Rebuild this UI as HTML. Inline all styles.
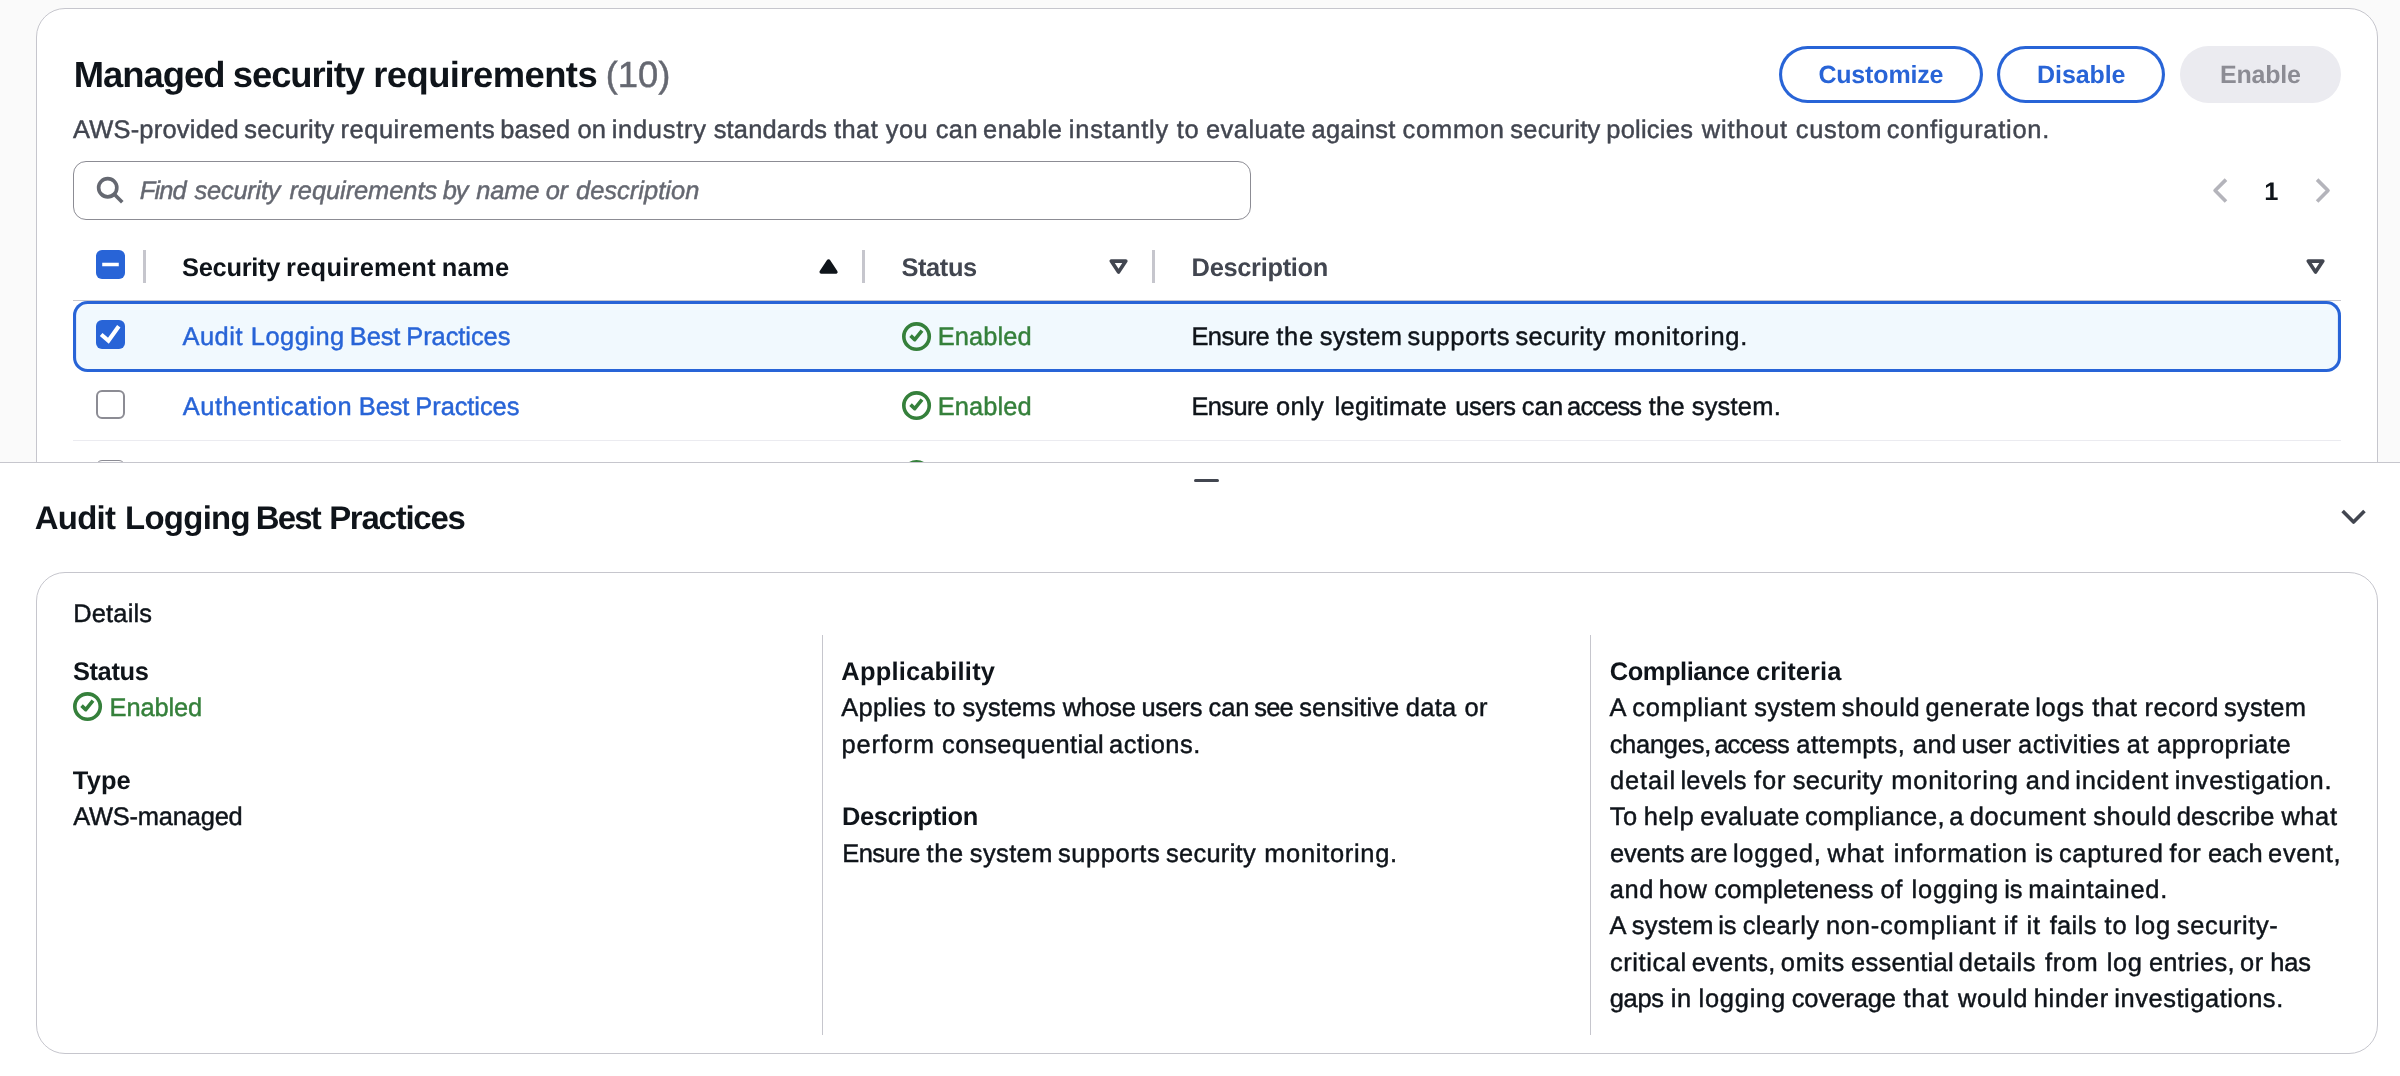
<!DOCTYPE html>
<html lang="en"><head><meta charset="utf-8"><title>Managed security requirements</title>
<style>
html,body{margin:0;padding:0}
body{width:2400px;height:1076px;overflow:hidden;position:relative;background:#fafafa;font-family:"Liberation Sans",Arial,sans-serif;color:#0f141a}
main,section,header,nav,div,dl,button,svg.ic,.t{position:absolute;box-sizing:border-box;margin:0;padding:0}
main{left:0;top:0;width:2400px;height:1076px}
.t{will-change:opacity;text-rendering:geometricPrecision;white-space:nowrap;font-weight:400;text-decoration:none;display:block}
.top{left:0;top:0;width:2400px;height:462px;overflow:hidden;background:#fafafa}
.card{background:#fff;border:1px solid #c6c6cd;border-radius:29px}
.tcard{left:36px;top:8px;width:2342px;height:600px}
.btn{appearance:none;-webkit-appearance:none;border:0;font:inherit;text-align:left;top:37px;height:57px;border-radius:40px;background:#fff;box-shadow:inset 0 0 0 3.1px #2864d7}
.btn.dis{background:#ebebf0;box-shadow:none}
.search{left:36px;top:152px;width:1178px;height:59px;border:1.5px solid #8c8c94;border-radius:13px;background:#fff}
.pager{left:2163px;top:152px;width:141px;height:59px}
.thead,.row,.selrow{left:36px;width:2268px}
.thead{top:223px;height:69px}
.vdiv{width:3px;background:#c6c6cd;top:18px;height:33px}
.hline{height:1px;left:0;top:68px;width:2268px}
.selrow{top:292px;height:71px;border-radius:14.5px;background:#f1f9fe;box-shadow:inset 0 0 0 3.1px #2864d7}
.row{height:69px}
.cb{left:23px;width:29px;height:29px;border-radius:6px}
.cb.on{background:#2864d7}
.cb.off{background:#fff;border:2px solid #8c8c94}
.cb svg{position:absolute;left:0;top:0;width:29px;height:29px}
.panel{left:0;top:462px;width:2400px;height:614px;background:#fff}
.panel .edge{left:0;top:0;width:2400px;height:1px;background:#c6c6cd}
.handle{left:1194px;top:17px;width:25.4px;height:3px;border-radius:1.5px;background:#424650}
.dcard{left:36px;top:110px;width:2342px;height:481.5px}
.col{top:62px;height:399.5px}
.coldiv{left:0;top:0;width:1px;height:399.5px;background:#c6c6cd}
svg.ic{width:29.09px;height:29.09px;fill:none;stroke:currentColor;stroke-width:2;stroke-linejoin:round;overflow:visible}
svg.ic .f{fill:currentColor}

</style></head><body>
<main>
<section class="top" aria-label="Managed security requirements">
  <div class="card tcard">
    <header>
<h2 class="t" style="left:0;top:0"><span class="t" style="left:36.69px;top:41.00px;font-size:36.40px;line-height:49px;letter-spacing:-0.973px;color:#0f141a;font-weight:700;">Managed</span> <span class="t" style="left:195.79px;top:41.00px;font-size:36.40px;line-height:49px;letter-spacing:-1.059px;color:#0f141a;font-weight:700;">security</span> <span class="t" style="left:336.17px;top:41.00px;font-size:36.40px;line-height:49px;letter-spacing:-0.549px;color:#0f141a;font-weight:700;">requirements</span></h2>
<span class="t" style="left:568.71px;top:41.00px;font-size:36.40px;line-height:49px;letter-spacing:-0.020px;color:#656871;-webkit-text-stroke:0.45px currentColor;">(10)</span>
<p class="t" style="left:0;top:0"><span class="t" style="left:35.91px;top:103.00px;font-size:25.45px;line-height:36px;letter-spacing:0.247px;color:#424650;-webkit-text-stroke:0.45px currentColor;">AWS-provided</span> <span class="t" style="left:207.25px;top:103.00px;font-size:25.45px;line-height:36px;letter-spacing:0.327px;color:#424650;-webkit-text-stroke:0.45px currentColor;">security</span> <span class="t" style="left:303.62px;top:103.00px;font-size:25.45px;line-height:36px;letter-spacing:0.507px;color:#424650;-webkit-text-stroke:0.45px currentColor;">requirements</span> <span class="t" style="left:463.27px;top:103.00px;font-size:25.45px;line-height:36px;letter-spacing:0.155px;color:#424650;-webkit-text-stroke:0.45px currentColor;">based on</span> <span class="t" style="left:574.66px;top:103.00px;font-size:25.45px;line-height:36px;letter-spacing:0.749px;color:#424650;-webkit-text-stroke:0.45px currentColor;">industry</span> <span class="t" style="left:676.69px;top:103.00px;font-size:25.45px;line-height:36px;letter-spacing:0.192px;color:#424650;-webkit-text-stroke:0.45px currentColor;">standards</span> <span class="t" style="left:796.97px;top:103.00px;font-size:25.45px;line-height:36px;letter-spacing:0.457px;color:#424650;-webkit-text-stroke:0.45px currentColor;">that you can</span> <span class="t" style="left:946.00px;top:103.00px;font-size:25.45px;line-height:36px;letter-spacing:0.518px;color:#424650;-webkit-text-stroke:0.45px currentColor;">enable</span> <span class="t" style="left:1031.85px;top:103.00px;font-size:25.45px;line-height:36px;letter-spacing:0.749px;color:#424650;-webkit-text-stroke:0.45px currentColor;">instantly to</span> <span class="t" style="left:1169.00px;top:103.00px;font-size:25.45px;line-height:36px;letter-spacing:0.461px;color:#424650;-webkit-text-stroke:0.45px currentColor;">evaluate</span> <span class="t" style="left:1274.56px;top:103.00px;font-size:25.45px;line-height:36px;letter-spacing:0.304px;color:#424650;-webkit-text-stroke:0.45px currentColor;">against</span> <span class="t" style="left:1365.60px;top:103.00px;font-size:25.45px;line-height:36px;letter-spacing:0.749px;color:#424650;-webkit-text-stroke:0.45px currentColor;">common</span> <span class="t" style="left:1473.25px;top:103.00px;font-size:25.45px;line-height:36px;letter-spacing:0.339px;color:#424650;-webkit-text-stroke:0.45px currentColor;">security</span> <span class="t" style="left:1569.25px;top:103.00px;font-size:25.45px;line-height:36px;letter-spacing:0.253px;color:#424650;-webkit-text-stroke:0.45px currentColor;">policies</span> <span class="t" style="left:1664.87px;top:103.00px;font-size:25.45px;line-height:36px;letter-spacing:0.749px;color:#424650;-webkit-text-stroke:0.45px currentColor;">without</span> <span class="t" style="left:1758.69px;top:103.00px;font-size:25.45px;line-height:36px;letter-spacing:0.745px;color:#424650;-webkit-text-stroke:0.45px currentColor;">custom</span> <span class="t" style="left:1849.87px;top:103.00px;font-size:25.45px;line-height:36px;letter-spacing:0.749px;color:#424650;-webkit-text-stroke:0.45px currentColor;">configuration.</span></p>
      <button class="btn" type="button" style="left:1742px;width:204px"><span class="t" style="left:39.38px;top:11.00px;font-size:25.00px;line-height:36px;letter-spacing:-0.164px;color:#2864d7;font-weight:700;">Customize</span></button>
      <button class="btn" type="button" style="left:1960px;width:168px"><span class="t" style="left:40.04px;top:11.00px;font-size:25.00px;line-height:36px;letter-spacing:-0.078px;color:#2864d7;font-weight:700;">Disable</span></button>
      <button class="btn dis" type="button" disabled style="left:2143px;width:161px"><span class="t" style="left:40.04px;top:11.00px;font-size:25.00px;line-height:36px;letter-spacing:-0.206px;color:#8c8c94;font-weight:700;">Enable</span></button>
    </header>
    <div class="search" role="search">
      <svg class="ic" viewBox="0 0 16 16" style="left:21.2px;top:13px;color:#656871"><circle cx="7" cy="7" r="5"/><path d="m15 15-4.5-4.5"/></svg>
<span class="t" style="left:0;top:0"><span class="t" style="left:65.84px;top:11.00px;font-size:25.45px;line-height:36px;letter-spacing:-0.923px;color:#656871;-webkit-text-stroke:0.45px currentColor;font-style:italic;">Find</span> <span class="t" style="left:120.60px;top:11.00px;font-size:25.45px;line-height:36px;letter-spacing:-0.256px;color:#656871;-webkit-text-stroke:0.45px currentColor;font-style:italic;">security</span> <span class="t" style="left:215.44px;top:11.00px;font-size:25.45px;line-height:36px;letter-spacing:-0.071px;color:#656871;-webkit-text-stroke:0.45px currentColor;font-style:italic;">requirements</span> <span class="t" style="left:368.65px;top:11.00px;font-size:25.45px;line-height:36px;letter-spacing:-0.923px;color:#656871;-webkit-text-stroke:0.45px currentColor;font-style:italic;">by</span> <span class="t" style="left:402.16px;top:11.00px;font-size:25.45px;line-height:36px;letter-spacing:-0.141px;color:#656871;-webkit-text-stroke:0.45px currentColor;font-style:italic;">name</span> <span class="t" style="left:471.82px;top:11.00px;font-size:25.45px;line-height:36px;letter-spacing:-0.504px;color:#656871;-webkit-text-stroke:0.45px currentColor;font-style:italic;">or</span> <span class="t" style="left:501.98px;top:11.00px;font-size:25.45px;line-height:36px;letter-spacing:0.040px;color:#656871;-webkit-text-stroke:0.45px currentColor;font-style:italic;">description</span></span>
    </div>
    <nav class="pager" aria-label="Pagination">
      <svg class="ic" viewBox="0 0 16 16" style="left:5.7px;top:14.7px;color:#b4b4bb"><path d="M11 2 5 8l6 6"/></svg>
<span class="t" style="left:64.25px;top:13.00px;font-size:25.45px;line-height:36px;letter-spacing:0.000px;color:#0f141a;font-weight:700;">1</span>
      <svg class="ic" viewBox="0 0 16 16" style="left:108.4px;top:14.7px;color:#b4b4bb"><path d="m5 2 6 6-6 6"/></svg>
    </nav>
    <div class="thead" role="row">
      <div class="cb on" role="checkbox" aria-checked="mixed" style="top:18px"><svg viewBox="0 0 14 14" fill="none" stroke="#fff" stroke-width="1.7"><path d="M3 7h8"/></svg></div>
      <div class="vdiv" style="left:70px"></div>
<span class="t" style="left:0;top:0"><span class="t" style="left:109.06px;top:18.00px;font-size:25.45px;line-height:36px;letter-spacing:-0.293px;color:#0f141a;font-weight:700;">Security</span> <span class="t" style="left:213.05px;top:18.00px;font-size:25.45px;line-height:36px;letter-spacing:0.254px;color:#0f141a;font-weight:700;">requirement</span> <span class="t" style="left:368.74px;top:18.00px;font-size:25.45px;line-height:36px;letter-spacing:0.280px;color:#0f141a;font-weight:700;">name</span></span>
<span class="t" style="left:828.56px;top:18.00px;font-size:25.45px;line-height:36px;letter-spacing:-0.431px;color:#424650;font-weight:700;">Status</span>
<span class="t" style="left:1118.59px;top:18.00px;font-size:25.45px;line-height:36px;letter-spacing:-0.323px;color:#424650;font-weight:700;">Description</span>
      <svg class="ic" viewBox="0 0 16 16" style="left:740.8px;top:20.2px;color:#0f141a"><path class="f" d="m8 5 4 6H4l4-6Z"/></svg>
      <div class="vdiv" style="left:788.5px"></div>
      <svg class="ic" viewBox="0 0 16 16" style="left:1031px;top:20.2px;color:#424650"><path d="M4 5h8l-4 6-4-6Z"/></svg>
      <div class="vdiv" style="left:1078.5px"></div>
      <svg class="ic" viewBox="0 0 16 16" style="left:2228px;top:20.2px;color:#424650"><path d="M4 5h8l-4 6-4-6Z"/></svg>
      <div class="hline" style="background:#c6c6cd"></div>
    </div>
    <div class="selrow" role="row" aria-selected="true">
      <div class="cb on" role="checkbox" aria-checked="true" style="top:19px"><svg viewBox="0 0 14 14" fill="none" stroke="#fff" stroke-width="2"><path d="M2.5 7 6 10l5-7"/></svg></div>
      <svg class="ic" viewBox="0 0 16 16" style="left:828.9px;top:20.7px;color:#35803b"><circle cx="8" cy="8" r="7"/><path d="M4.7 7.5 7 9.7l4-4.9"/></svg>
<a class="t" style="left:0;top:0"><span class="t" style="left:109.53px;top:18.00px;font-size:25.45px;line-height:36px;letter-spacing:0.487px;color:#2864d7;-webkit-text-stroke:0.45px currentColor;">Audit</span> <span class="t" style="left:177.81px;top:18.00px;font-size:25.45px;line-height:36px;letter-spacing:0.487px;color:#2864d7;-webkit-text-stroke:0.45px currentColor;">Logging</span> <span class="t" style="left:276.86px;top:18.00px;font-size:25.45px;line-height:36px;letter-spacing:-0.119px;color:#2864d7;-webkit-text-stroke:0.45px currentColor;">Best</span> <span class="t" style="left:333.30px;top:18.00px;font-size:25.45px;line-height:36px;letter-spacing:-0.060px;color:#2864d7;-webkit-text-stroke:0.45px currentColor;">Practices</span></a>
<span class="t" style="left:864.80px;top:18.00px;font-size:25.45px;line-height:36px;letter-spacing:0.092px;color:#35803b;-webkit-text-stroke:0.45px currentColor;">Enabled</span>
<span class="t" style="left:0;top:0"><span class="t" style="left:1118.38px;top:18.00px;font-size:25.45px;line-height:36px;letter-spacing:-0.471px;color:#0f141a;-webkit-text-stroke:0.45px currentColor;">Ensure</span> <span class="t" style="left:1203.28px;top:18.00px;font-size:25.45px;line-height:36px;letter-spacing:0.729px;color:#0f141a;-webkit-text-stroke:0.45px currentColor;">the</span> <span class="t" style="left:1246.69px;top:18.00px;font-size:25.45px;line-height:36px;letter-spacing:0.351px;color:#0f141a;-webkit-text-stroke:0.45px currentColor;">system</span> <span class="t" style="left:1334.52px;top:18.00px;font-size:25.45px;line-height:36px;letter-spacing:0.615px;color:#0f141a;-webkit-text-stroke:0.45px currentColor;">supports</span> <span class="t" style="left:1442.52px;top:18.00px;font-size:25.45px;line-height:36px;letter-spacing:0.316px;color:#0f141a;-webkit-text-stroke:0.45px currentColor;">security</span> <span class="t" style="left:1541.10px;top:18.00px;font-size:25.45px;line-height:36px;letter-spacing:0.729px;color:#0f141a;-webkit-text-stroke:0.45px currentColor;">monitoring.</span></span>
    </div>
    <div class="row" role="row" style="top:363px">
      <div class="cb off" role="checkbox" aria-checked="false" style="top:18px"></div>
      <svg class="ic" viewBox="0 0 16 16" style="left:828.9px;top:18.7px;color:#35803b"><circle cx="8" cy="8" r="7"/><path d="M4.7 7.5 7 9.7l4-4.9"/></svg>
<a class="t" style="left:0;top:0"><span class="t" style="left:109.78px;top:17.00px;font-size:25.45px;line-height:36px;letter-spacing:0.593px;color:#2864d7;-webkit-text-stroke:0.45px currentColor;">Authentication</span> <span class="t" style="left:285.86px;top:17.00px;font-size:25.45px;line-height:36px;letter-spacing:-0.110px;color:#2864d7;-webkit-text-stroke:0.45px currentColor;">Best</span> <span class="t" style="left:342.34px;top:17.00px;font-size:25.45px;line-height:36px;letter-spacing:-0.065px;color:#2864d7;-webkit-text-stroke:0.45px currentColor;">Practices</span></a>
<span class="t" style="left:864.80px;top:17.00px;font-size:25.45px;line-height:36px;letter-spacing:0.092px;color:#35803b;-webkit-text-stroke:0.45px currentColor;">Enabled</span>
<span class="t" style="left:0;top:0"><span class="t" style="left:1118.39px;top:17.00px;font-size:25.45px;line-height:36px;letter-spacing:-0.599px;color:#0f141a;-webkit-text-stroke:0.45px currentColor;">Ensure</span> <span class="t" style="left:1203.00px;top:17.00px;font-size:25.45px;line-height:36px;letter-spacing:0.361px;color:#0f141a;-webkit-text-stroke:0.45px currentColor;">only</span> <span class="t" style="left:1261.41px;top:17.00px;font-size:25.45px;line-height:36px;letter-spacing:0.361px;color:#0f141a;-webkit-text-stroke:0.45px currentColor;">legitimate</span> <span class="t" style="left:1382.28px;top:17.00px;font-size:25.45px;line-height:36px;letter-spacing:-0.370px;color:#0f141a;-webkit-text-stroke:0.45px currentColor;">users</span> <span class="t" style="left:1448.69px;top:17.00px;font-size:25.45px;line-height:36px;letter-spacing:0.168px;color:#0f141a;-webkit-text-stroke:0.45px currentColor;">can</span> <span class="t" style="left:1494.10px;top:17.00px;font-size:25.45px;line-height:36px;letter-spacing:-0.839px;color:#0f141a;-webkit-text-stroke:0.45px currentColor;">access</span> <span class="t" style="left:1575.69px;top:17.00px;font-size:25.45px;line-height:36px;letter-spacing:0.361px;color:#0f141a;-webkit-text-stroke:0.45px currentColor;">the</span> <span class="t" style="left:1618.69px;top:17.00px;font-size:25.45px;line-height:36px;letter-spacing:0.239px;color:#0f141a;-webkit-text-stroke:0.45px currentColor;">system.</span></span>
      <div class="hline" style="background:#ebebf0"></div>
    </div>
    <div class="row" role="row" style="top:432px">
      <div class="cb off" role="checkbox" aria-checked="false" style="top:19px;border-width:1px"></div>
      <svg class="ic" viewBox="0 0 16 16" style="left:829px;top:19px;color:#35803b"><circle cx="8" cy="8" r="7"/></svg>
    </div>
  </div>
</section>
<section class="panel" aria-label="Audit Logging Best Practices">
  <div class="edge"></div>
  <div class="handle" role="separator"></div>
<h3 class="t" style="left:0;top:0"><span class="t" style="left:34.69px;top:33.00px;font-size:32.90px;line-height:45px;letter-spacing:-0.680px;color:#0f141a;font-weight:700;">Audit</span> <span class="t" style="left:125.03px;top:33.00px;font-size:32.90px;line-height:45px;letter-spacing:-0.680px;color:#0f141a;font-weight:700;">Logging</span> <span class="t" style="left:255.87px;top:33.00px;font-size:32.90px;line-height:45px;letter-spacing:-1.841px;color:#0f141a;font-weight:700;">Best</span> <span class="t" style="left:329.15px;top:33.00px;font-size:32.90px;line-height:45px;letter-spacing:-1.206px;color:#0f141a;font-weight:700;">Practices</span></h3>
  <svg class="ic" viewBox="0 0 16 16" style="left:2338.8px;top:39.7px;color:#424650"><path d="m2 5 6 6 6-6"/></svg>
  <div class="card dcard">
<span class="t" style="left:36.16px;top:23.00px;font-size:25.45px;line-height:36px;letter-spacing:0.196px;color:#0f141a;-webkit-text-stroke:0.45px currentColor;">Details</span>
    <dl class="col" style="left:36px;width:749px">
      <svg class="ic" viewBox="0 0 16 16" style="left:0;top:57.2px;color:#35803b"><circle cx="8" cy="8" r="7"/><path d="M4.7 7.5 7 9.7l4-4.9"/></svg>
<dt class="t" style="left:-0.10px;top:19.00px;font-size:25.45px;line-height:36px;letter-spacing:-0.360px;color:#0f141a;font-weight:700;">Status</dt>
<dd class="t" style="left:36.53px;top:55.00px;font-size:25.45px;line-height:36px;letter-spacing:-0.103px;color:#35803b;-webkit-text-stroke:0.45px currentColor;">Enabled</dd>
<dt class="t" style="left:-0.17px;top:128.00px;font-size:25.45px;line-height:36px;letter-spacing:0.134px;color:#0f141a;font-weight:700;">Type</dt>
<dd class="t" style="left:0.16px;top:164.00px;font-size:25.45px;line-height:36px;letter-spacing:-0.193px;color:#0f141a;-webkit-text-stroke:0.45px currentColor;">AWS-managed</dd>
    </dl>
    <dl class="col" style="left:785px;width:768px">
      <div class="coldiv"></div>
<dt class="t" style="left:19.35px;top:19.00px;font-size:25.45px;line-height:36px;letter-spacing:0.197px;color:#0f141a;font-weight:700;">Applicability</dt>
<dd class="t" style="left:0;top:0"><span class="t" style="left:19.37px;top:55.00px;font-size:25.45px;line-height:36px;letter-spacing:0.215px;color:#0f141a;-webkit-text-stroke:0.45px currentColor;">Applies</span> <span class="t" style="left:111.85px;top:55.00px;font-size:25.45px;line-height:36px;letter-spacing:0.317px;color:#0f141a;-webkit-text-stroke:0.45px currentColor;">to</span> <span class="t" style="left:140.61px;top:55.00px;font-size:25.45px;line-height:36px;letter-spacing:-0.041px;color:#0f141a;-webkit-text-stroke:0.45px currentColor;">systems</span> <span class="t" style="left:240.83px;top:55.00px;font-size:25.45px;line-height:36px;letter-spacing:-0.091px;color:#0f141a;-webkit-text-stroke:0.45px currentColor;">whose</span> <span class="t" style="left:319.42px;top:55.00px;font-size:25.45px;line-height:36px;letter-spacing:-0.308px;color:#0f141a;-webkit-text-stroke:0.45px currentColor;">users</span> <span class="t" style="left:386.59px;top:55.00px;font-size:25.45px;line-height:36px;letter-spacing:-0.135px;color:#0f141a;-webkit-text-stroke:0.45px currentColor;">can</span> <span class="t" style="left:432.36px;top:55.00px;font-size:25.45px;line-height:36px;letter-spacing:-0.883px;color:#0f141a;-webkit-text-stroke:0.45px currentColor;">see</span> <span class="t" style="left:477.27px;top:55.00px;font-size:25.45px;line-height:36px;letter-spacing:0.128px;color:#0f141a;-webkit-text-stroke:0.45px currentColor;">sensitive</span> <span class="t" style="left:583.73px;top:55.00px;font-size:25.45px;line-height:36px;letter-spacing:0.317px;color:#0f141a;-webkit-text-stroke:0.45px currentColor;">data</span> <span class="t" style="left:642.58px;top:55.00px;font-size:25.45px;line-height:36px;letter-spacing:0.317px;color:#0f141a;-webkit-text-stroke:0.45px currentColor;">or</span></dd>
<dd class="t" style="left:0;top:0"><span class="t" style="left:19.62px;top:92.00px;font-size:25.45px;line-height:36px;letter-spacing:0.779px;color:#0f141a;-webkit-text-stroke:0.45px currentColor;">perform</span> <span class="t" style="left:120.04px;top:92.00px;font-size:25.45px;line-height:36px;letter-spacing:0.390px;color:#0f141a;-webkit-text-stroke:0.45px currentColor;">consequential</span> <span class="t" style="left:287.11px;top:92.00px;font-size:25.45px;line-height:36px;letter-spacing:0.489px;color:#0f141a;-webkit-text-stroke:0.45px currentColor;">actions.</span></dd>
<dt class="t" style="left:19.89px;top:164.00px;font-size:25.45px;line-height:36px;letter-spacing:-0.354px;color:#0f141a;font-weight:700;">Description</dt>
<dd class="t" style="left:0;top:0"><span class="t" style="left:20.17px;top:201.00px;font-size:25.45px;line-height:36px;letter-spacing:-0.495px;color:#0f141a;-webkit-text-stroke:0.45px currentColor;">Ensure</span> <span class="t" style="left:104.48px;top:201.00px;font-size:25.45px;line-height:36px;letter-spacing:0.705px;color:#0f141a;-webkit-text-stroke:0.45px currentColor;">the</span> <span class="t" style="left:147.81px;top:201.00px;font-size:25.45px;line-height:36px;letter-spacing:0.394px;color:#0f141a;-webkit-text-stroke:0.45px currentColor;">system</span> <span class="t" style="left:235.92px;top:201.00px;font-size:25.45px;line-height:36px;letter-spacing:0.595px;color:#0f141a;-webkit-text-stroke:0.45px currentColor;">supports</span> <span class="t" style="left:343.92px;top:201.00px;font-size:25.45px;line-height:36px;letter-spacing:0.305px;color:#0f141a;-webkit-text-stroke:0.45px currentColor;">security</span> <span class="t" style="left:442.20px;top:201.00px;font-size:25.45px;line-height:36px;letter-spacing:0.705px;color:#0f141a;-webkit-text-stroke:0.45px currentColor;">monitoring.</span></dd>
    </dl>
    <dl class="col" style="left:1553px;width:751px">
      <div class="coldiv"></div>
<dt class="t" style="left:0;top:0"><span class="t" style="left:19.76px;top:19.00px;font-size:25.45px;line-height:36px;letter-spacing:-0.443px;color:#0f141a;font-weight:700;">Compliance</span> <span class="t" style="left:165.93px;top:19.00px;font-size:25.45px;line-height:36px;letter-spacing:0.078px;color:#0f141a;font-weight:700;">criteria</span></dt>
<dd class="t" style="left:0;top:0"><span class="t" style="left:19.49px;top:55.00px;font-size:25.45px;line-height:36px;letter-spacing:0.000px;color:#0f141a;-webkit-text-stroke:0.45px currentColor;">A</span> <span class="t" style="left:42.34px;top:55.00px;font-size:25.45px;line-height:36px;letter-spacing:0.673px;color:#0f141a;-webkit-text-stroke:0.45px currentColor;">compliant</span> <span class="t" style="left:164.27px;top:55.00px;font-size:25.45px;line-height:36px;letter-spacing:0.316px;color:#0f141a;-webkit-text-stroke:0.45px currentColor;">system</span> <span class="t" style="left:251.81px;top:55.00px;font-size:25.45px;line-height:36px;letter-spacing:0.601px;color:#0f141a;-webkit-text-stroke:0.45px currentColor;">should</span> <span class="t" style="left:335.41px;top:55.00px;font-size:25.45px;line-height:36px;letter-spacing:0.571px;color:#0f141a;-webkit-text-stroke:0.45px currentColor;">generate</span> <span class="t" style="left:445.29px;top:55.00px;font-size:25.45px;line-height:36px;letter-spacing:0.673px;color:#0f141a;-webkit-text-stroke:0.45px currentColor;">logs</span> <span class="t" style="left:502.25px;top:55.00px;font-size:25.45px;line-height:36px;letter-spacing:0.673px;color:#0f141a;-webkit-text-stroke:0.45px currentColor;">that</span> <span class="t" style="left:554.62px;top:55.00px;font-size:25.45px;line-height:36px;letter-spacing:0.348px;color:#0f141a;-webkit-text-stroke:0.45px currentColor;">record</span> <span class="t" style="left:633.99px;top:55.00px;font-size:25.45px;line-height:36px;letter-spacing:0.289px;color:#0f141a;-webkit-text-stroke:0.45px currentColor;">system</span></dd>
<dd class="t" style="left:0;top:0"><span class="t" style="left:19.64px;top:92.00px;font-size:25.45px;line-height:36px;letter-spacing:-0.230px;color:#0f141a;-webkit-text-stroke:0.45px currentColor;">changes,</span> <span class="t" style="left:124.15px;top:92.00px;font-size:25.45px;line-height:36px;letter-spacing:-0.711px;color:#0f141a;-webkit-text-stroke:0.45px currentColor;">access</span> <span class="t" style="left:206.29px;top:92.00px;font-size:25.45px;line-height:36px;letter-spacing:0.489px;color:#0f141a;-webkit-text-stroke:0.45px currentColor;">attempts,</span> <span class="t" style="left:322.81px;top:92.00px;font-size:25.45px;line-height:36px;letter-spacing:0.489px;color:#0f141a;-webkit-text-stroke:0.45px currentColor;">and</span> <span class="t" style="left:371.55px;top:92.00px;font-size:25.45px;line-height:36px;letter-spacing:-0.049px;color:#0f141a;-webkit-text-stroke:0.45px currentColor;">user</span> <span class="t" style="left:428.03px;top:92.00px;font-size:25.45px;line-height:36px;letter-spacing:0.489px;color:#0f141a;-webkit-text-stroke:0.45px currentColor;">activities</span> <span class="t" style="left:536.80px;top:92.00px;font-size:25.45px;line-height:36px;letter-spacing:0.489px;color:#0f141a;-webkit-text-stroke:0.45px currentColor;">at</span> <span class="t" style="left:567.10px;top:92.00px;font-size:25.45px;line-height:36px;letter-spacing:0.489px;color:#0f141a;-webkit-text-stroke:0.45px currentColor;">appropriate</span></dd>
<dd class="t" style="left:0;top:0"><span class="t" style="left:20.03px;top:128.00px;font-size:25.45px;line-height:36px;letter-spacing:0.885px;color:#0f141a;-webkit-text-stroke:0.45px currentColor;">detail</span> <span class="t" style="left:90.51px;top:128.00px;font-size:25.45px;line-height:36px;letter-spacing:0.176px;color:#0f141a;-webkit-text-stroke:0.45px currentColor;">levels</span> <span class="t" style="left:163.96px;top:128.00px;font-size:25.45px;line-height:36px;letter-spacing:0.885px;color:#0f141a;-webkit-text-stroke:0.45px currentColor;">for</span> <span class="t" style="left:202.69px;top:128.00px;font-size:25.45px;line-height:36px;letter-spacing:0.296px;color:#0f141a;-webkit-text-stroke:0.45px currentColor;">security</span> <span class="t" style="left:301.15px;top:128.00px;font-size:25.45px;line-height:36px;letter-spacing:0.885px;color:#0f141a;-webkit-text-stroke:0.45px currentColor;">monitoring</span> <span class="t" style="left:435.82px;top:128.00px;font-size:25.45px;line-height:36px;letter-spacing:0.885px;color:#0f141a;-webkit-text-stroke:0.45px currentColor;">and</span> <span class="t" style="left:485.22px;top:128.00px;font-size:25.45px;line-height:36px;letter-spacing:0.788px;color:#0f141a;-webkit-text-stroke:0.45px currentColor;">incident</span> <span class="t" style="left:584.81px;top:128.00px;font-size:25.45px;line-height:36px;letter-spacing:0.629px;color:#0f141a;-webkit-text-stroke:0.45px currentColor;">investigation.</span></dd>
<dd class="t" style="left:0;top:0"><span class="t" style="left:19.79px;top:164.00px;font-size:25.45px;line-height:36px;letter-spacing:0.616px;color:#0f141a;-webkit-text-stroke:0.45px currentColor;">To</span> <span class="t" style="left:53.72px;top:164.00px;font-size:25.45px;line-height:36px;letter-spacing:0.616px;color:#0f141a;-webkit-text-stroke:0.45px currentColor;">help</span> <span class="t" style="left:110.33px;top:164.00px;font-size:25.45px;line-height:36px;letter-spacing:0.402px;color:#0f141a;-webkit-text-stroke:0.45px currentColor;">evaluate</span> <span class="t" style="left:215.04px;top:164.00px;font-size:25.45px;line-height:36px;letter-spacing:0.374px;color:#0f141a;-webkit-text-stroke:0.45px currentColor;">compliance,</span> <span class="t" style="left:359.33px;top:164.00px;font-size:25.45px;line-height:36px;letter-spacing:0.000px;color:#0f141a;-webkit-text-stroke:0.45px currentColor;">a</span> <span class="t" style="left:379.77px;top:164.00px;font-size:25.45px;line-height:36px;letter-spacing:0.616px;color:#0f141a;-webkit-text-stroke:0.45px currentColor;">document</span> <span class="t" style="left:503.29px;top:164.00px;font-size:25.45px;line-height:36px;letter-spacing:0.616px;color:#0f141a;-webkit-text-stroke:0.45px currentColor;">should</span> <span class="t" style="left:586.78px;top:164.00px;font-size:25.45px;line-height:36px;letter-spacing:0.198px;color:#0f141a;-webkit-text-stroke:0.45px currentColor;">describe</span> <span class="t" style="left:691.38px;top:164.00px;font-size:25.45px;line-height:36px;letter-spacing:0.616px;color:#0f141a;-webkit-text-stroke:0.45px currentColor;">what</span></dd>
<dd class="t" style="left:0;top:0"><span class="t" style="left:19.90px;top:201.00px;font-size:25.45px;line-height:36px;letter-spacing:-0.092px;color:#0f141a;-webkit-text-stroke:0.45px currentColor;">events</span> <span class="t" style="left:100.33px;top:201.00px;font-size:25.45px;line-height:36px;letter-spacing:0.185px;color:#0f141a;-webkit-text-stroke:0.45px currentColor;">are</span> <span class="t" style="left:142.93px;top:201.00px;font-size:25.45px;line-height:36px;letter-spacing:0.733px;color:#0f141a;-webkit-text-stroke:0.45px currentColor;">logged,</span> <span class="t" style="left:237.56px;top:201.00px;font-size:25.45px;line-height:36px;letter-spacing:0.733px;color:#0f141a;-webkit-text-stroke:0.45px currentColor;">what</span> <span class="t" style="left:303.78px;top:201.00px;font-size:25.45px;line-height:36px;letter-spacing:0.733px;color:#0f141a;-webkit-text-stroke:0.45px currentColor;">information</span> <span class="t" style="left:445.08px;top:201.00px;font-size:25.45px;line-height:36px;letter-spacing:-0.467px;color:#0f141a;-webkit-text-stroke:0.45px currentColor;">is</span> <span class="t" style="left:468.93px;top:201.00px;font-size:25.45px;line-height:36px;letter-spacing:0.702px;color:#0f141a;-webkit-text-stroke:0.45px currentColor;">captured</span> <span class="t" style="left:579.58px;top:201.00px;font-size:25.45px;line-height:36px;letter-spacing:0.733px;color:#0f141a;-webkit-text-stroke:0.45px currentColor;">for</span> <span class="t" style="left:618.09px;top:201.00px;font-size:25.45px;line-height:36px;letter-spacing:-0.172px;color:#0f141a;-webkit-text-stroke:0.45px currentColor;">each</span> <span class="t" style="left:678.09px;top:201.00px;font-size:25.45px;line-height:36px;letter-spacing:0.659px;color:#0f141a;-webkit-text-stroke:0.45px currentColor;">event,</span></dd>
<dd class="t" style="left:0;top:0"><span class="t" style="left:19.87px;top:237.00px;font-size:25.45px;line-height:36px;letter-spacing:0.576px;color:#0f141a;-webkit-text-stroke:0.45px currentColor;">and</span> <span class="t" style="left:68.67px;top:237.00px;font-size:25.45px;line-height:36px;letter-spacing:0.752px;color:#0f141a;-webkit-text-stroke:0.45px currentColor;">how</span> <span class="t" style="left:124.36px;top:237.00px;font-size:25.45px;line-height:36px;letter-spacing:0.189px;color:#0f141a;-webkit-text-stroke:0.45px currentColor;">completeness</span> <span class="t" style="left:290.43px;top:237.00px;font-size:25.45px;line-height:36px;letter-spacing:0.752px;color:#0f141a;-webkit-text-stroke:0.45px currentColor;">of</span> <span class="t" style="left:321.62px;top:237.00px;font-size:25.45px;line-height:36px;letter-spacing:0.752px;color:#0f141a;-webkit-text-stroke:0.45px currentColor;">logging</span> <span class="t" style="left:414.32px;top:237.00px;font-size:25.45px;line-height:36px;letter-spacing:-0.306px;color:#0f141a;-webkit-text-stroke:0.45px currentColor;">is</span> <span class="t" style="left:438.28px;top:237.00px;font-size:25.45px;line-height:36px;letter-spacing:0.752px;color:#0f141a;-webkit-text-stroke:0.45px currentColor;">maintained.</span></dd>
<dd class="t" style="left:0;top:0"><span class="t" style="left:19.49px;top:273.00px;font-size:25.45px;line-height:36px;letter-spacing:0.000px;color:#0f141a;-webkit-text-stroke:0.45px currentColor;">A</span> <span class="t" style="left:41.69px;top:273.00px;font-size:25.45px;line-height:36px;letter-spacing:0.260px;color:#0f141a;-webkit-text-stroke:0.45px currentColor;">system</span> <span class="t" style="left:128.32px;top:273.00px;font-size:25.45px;line-height:36px;letter-spacing:-0.265px;color:#0f141a;-webkit-text-stroke:0.45px currentColor;">is</span> <span class="t" style="left:152.67px;top:273.00px;font-size:25.45px;line-height:36px;letter-spacing:0.470px;color:#0f141a;-webkit-text-stroke:0.45px currentColor;">clearly</span> <span class="t" style="left:235.88px;top:273.00px;font-size:25.45px;line-height:36px;letter-spacing:0.818px;color:#0f141a;-webkit-text-stroke:0.45px currentColor;">non-compliant</span> <span class="t" style="left:413.63px;top:273.00px;font-size:25.45px;line-height:36px;letter-spacing:0.818px;color:#0f141a;-webkit-text-stroke:0.45px currentColor;">if</span> <span class="t" style="left:436.58px;top:273.00px;font-size:25.45px;line-height:36px;letter-spacing:0.818px;color:#0f141a;-webkit-text-stroke:0.45px currentColor;">it</span> <span class="t" style="left:459.64px;top:273.00px;font-size:25.45px;line-height:36px;letter-spacing:0.388px;color:#0f141a;-webkit-text-stroke:0.45px currentColor;">fails</span> <span class="t" style="left:514.58px;top:273.00px;font-size:25.45px;line-height:36px;letter-spacing:0.818px;color:#0f141a;-webkit-text-stroke:0.45px currentColor;">to</span> <span class="t" style="left:544.58px;top:273.00px;font-size:25.45px;line-height:36px;letter-spacing:0.818px;color:#0f141a;-webkit-text-stroke:0.45px currentColor;">log</span> <span class="t" style="left:586.81px;top:273.00px;font-size:25.45px;line-height:36px;letter-spacing:0.610px;color:#0f141a;-webkit-text-stroke:0.45px currentColor;">security-</span></dd>
<dd class="t" style="left:0;top:0"><span class="t" style="left:19.93px;top:310.00px;font-size:25.45px;line-height:36px;letter-spacing:0.592px;color:#0f141a;-webkit-text-stroke:0.45px currentColor;">critical</span> <span class="t" style="left:101.64px;top:310.00px;font-size:25.45px;line-height:36px;letter-spacing:0.299px;color:#0f141a;-webkit-text-stroke:0.45px currentColor;">events,</span> <span class="t" style="left:190.87px;top:310.00px;font-size:25.45px;line-height:36px;letter-spacing:0.658px;color:#0f141a;-webkit-text-stroke:0.45px currentColor;">omits</span> <span class="t" style="left:261.11px;top:310.00px;font-size:25.45px;line-height:36px;letter-spacing:0.255px;color:#0f141a;-webkit-text-stroke:0.45px currentColor;">essential</span> <span class="t" style="left:368.83px;top:310.00px;font-size:25.45px;line-height:36px;letter-spacing:0.510px;color:#0f141a;-webkit-text-stroke:0.45px currentColor;">details</span> <span class="t" style="left:454.94px;top:310.00px;font-size:25.45px;line-height:36px;letter-spacing:0.658px;color:#0f141a;-webkit-text-stroke:0.45px currentColor;">from</span> <span class="t" style="left:516.72px;top:310.00px;font-size:25.45px;line-height:36px;letter-spacing:0.658px;color:#0f141a;-webkit-text-stroke:0.45px currentColor;">log</span> <span class="t" style="left:558.90px;top:310.00px;font-size:25.45px;line-height:36px;letter-spacing:0.312px;color:#0f141a;-webkit-text-stroke:0.45px currentColor;">entries,</span> <span class="t" style="left:649.96px;top:310.00px;font-size:25.45px;line-height:36px;letter-spacing:0.658px;color:#0f141a;-webkit-text-stroke:0.45px currentColor;">or</span> <span class="t" style="left:680.23px;top:310.00px;font-size:25.45px;line-height:36px;letter-spacing:-0.155px;color:#0f141a;-webkit-text-stroke:0.45px currentColor;">has</span></dd>
<dd class="t" style="left:0;top:0"><span class="t" style="left:19.83px;top:346.00px;font-size:25.45px;line-height:36px;letter-spacing:-0.353px;color:#0f141a;-webkit-text-stroke:0.45px currentColor;">gaps</span> <span class="t" style="left:80.68px;top:346.00px;font-size:25.45px;line-height:36px;letter-spacing:0.769px;color:#0f141a;-webkit-text-stroke:0.45px currentColor;">in</span> <span class="t" style="left:108.52px;top:346.00px;font-size:25.45px;line-height:36px;letter-spacing:0.769px;color:#0f141a;-webkit-text-stroke:0.45px currentColor;">logging</span> <span class="t" style="left:201.69px;top:346.00px;font-size:25.45px;line-height:36px;letter-spacing:-0.048px;color:#0f141a;-webkit-text-stroke:0.45px currentColor;">coverage</span> <span class="t" style="left:313.54px;top:346.00px;font-size:25.45px;line-height:36px;letter-spacing:0.769px;color:#0f141a;-webkit-text-stroke:0.45px currentColor;">that</span> <span class="t" style="left:367.97px;top:346.00px;font-size:25.45px;line-height:36px;letter-spacing:0.769px;color:#0f141a;-webkit-text-stroke:0.45px currentColor;">would</span> <span class="t" style="left:443.70px;top:346.00px;font-size:25.45px;line-height:36px;letter-spacing:0.769px;color:#0f141a;-webkit-text-stroke:0.45px currentColor;">hinder</span> <span class="t" style="left:524.32px;top:346.00px;font-size:25.45px;line-height:36px;letter-spacing:0.549px;color:#0f141a;-webkit-text-stroke:0.45px currentColor;">investigations.</span></dd>
    </dl>
  </div>
</section>
</main>

</body></html>
